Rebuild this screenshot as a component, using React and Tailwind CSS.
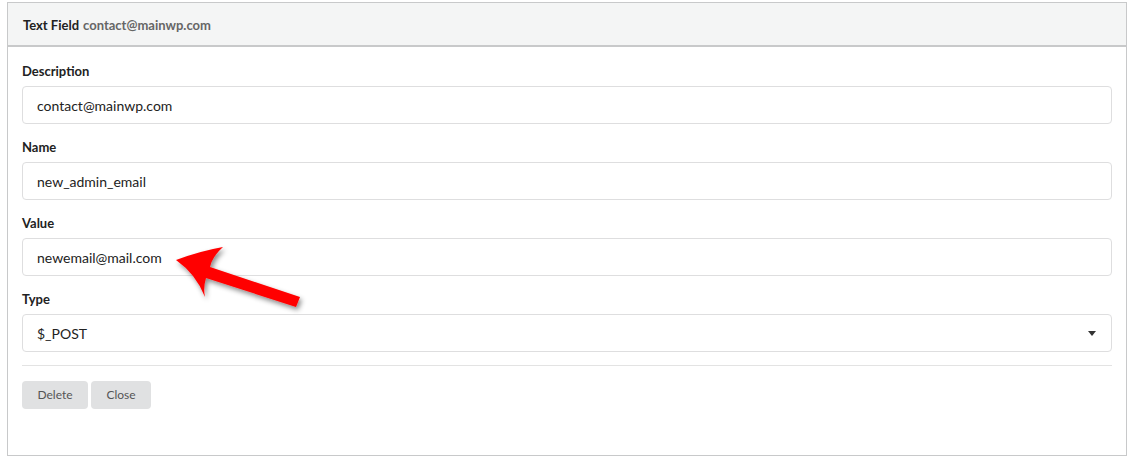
import { useState } from 'react';

const inputCls =
  'block w-full h-[38px] border border-[#dededf] rounded-[4px] px-[14px] text-[14px] text-[#222] bg-white outline-none';

function Field({ label, children }) {
  return (
    <div className="mb-[13px]">
      <label className="block h-[20px] mb-[5px] text-[13px] font-bold text-[#222] leading-[20px]">{label}</label>
      {children}
    </div>
  );
}

function RedArrow() {
  return (
    <svg className="absolute left-0 top-0 pointer-events-none" width="320" height="330" viewBox="0 0 320 330">
      <defs>
        <filter id="sh" x="-20%" y="-20%" width="140%" height="140%">
          <feDropShadow dx="2" dy="3" stdDeviation="2.5" floodColor="#000" floodOpacity="0.45" />
        </filter>
      </defs>
      <path
        d="M176,260 Q200,251 223,247 Q212,257 210,267 L300,297 L296,307 L206,278 Q203,288 205,297 Q196,274 176,260 Z"
        fill="#ff0000"
        filter="url(#sh)"
      />
    </svg>
  );
}

export default function App() {
  const [desc, setDesc] = useState('contact@mainwp.com');
  const [name, setName] = useState('new_admin_email');
  const [value, setValue] = useState('newemail@mail.com');

  return (
    <div className="relative w-[1131px] h-[459px] bg-white pt-[2px] pl-[7px]" style={{ fontFamily: 'Lato, "Open Sans", sans-serif' }}>
      <div className="w-[1120px] h-[454px] border border-[#c8c9ca] flex flex-col">
        <div className="h-[44px] bg-[#f4f5f5] border-b-2 border-[#c8c9ca] flex items-center pt-[3px] px-[15px] text-[13px] font-bold">
          <span className="text-[#222]">Text Field</span>
          <span className="ml-[4px] text-[#666]">contact@mainwp.com</span>
        </div>
        <div className="pt-[14px] pl-[14px] pr-[14px]">
          <Field label="Description">
            <input className={inputCls} value={desc} onChange={(e) => setDesc(e.target.value)} />
          </Field>
          <Field label="Name">
            <input className={inputCls} value={name} onChange={(e) => setName(e.target.value)} />
          </Field>
          <Field label="Value">
            <input className={inputCls} value={value} onChange={(e) => setValue(e.target.value)} />
          </Field>
          <Field label="Type">
            <div className={`${inputCls} flex items-center justify-between`}>
              <span>$_POST</span>
              <svg width="8" height="5" viewBox="0 0 8 5" className="mr-[1px]">
                <path d="M0,0 L8,0 L4,5 Z" fill="#333" />
              </svg>
            </div>
          </Field>
          <div className="mt-[1px] border-t border-[#e3e3e3]" />
          <div className="flex gap-[3px] mt-[15px]">
            <button className="h-[28px] w-[66px] rounded-[4px] bg-[#e0e1e2] text-[12px] text-[#555]">Delete</button>
            <button className="h-[28px] w-[60px] rounded-[4px] bg-[#e0e1e2] text-[12px] text-[#555]">Close</button>
          </div>
        </div>
      </div>
      <RedArrow />
    </div>
  );
}
